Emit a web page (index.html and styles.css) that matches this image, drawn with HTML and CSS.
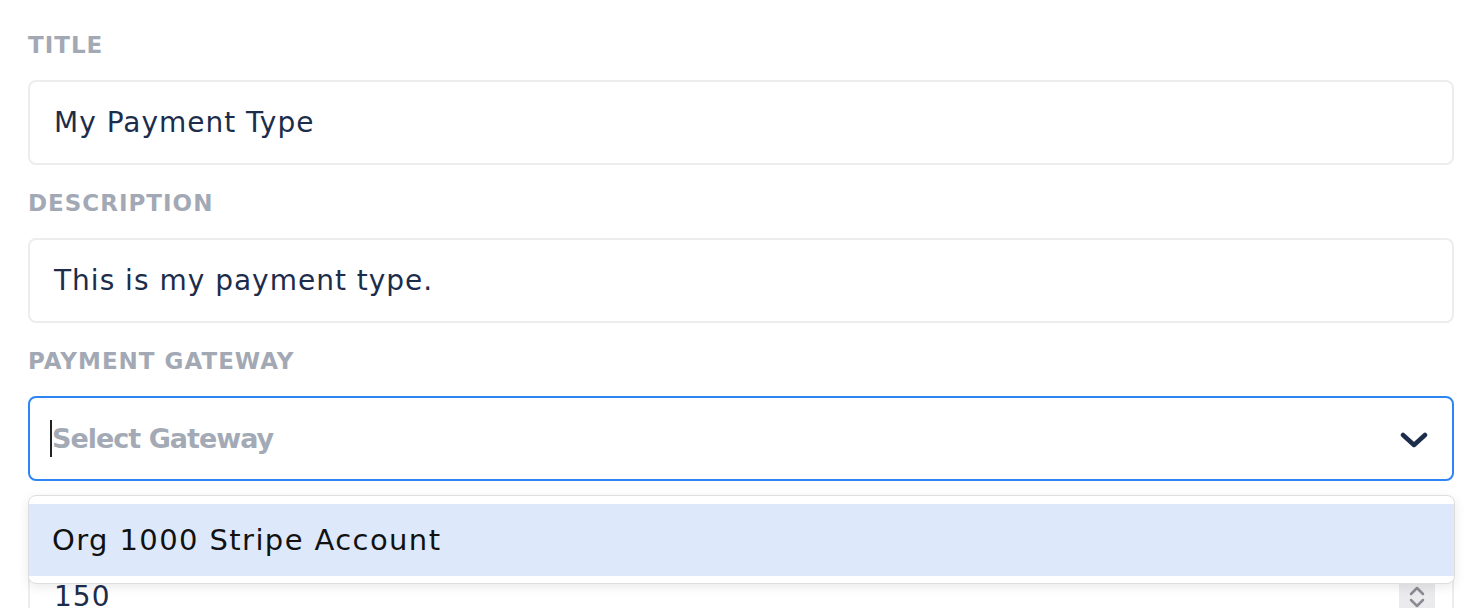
FILE: index.html
```html
<!DOCTYPE html>
<html>
<head>
<meta charset="utf-8">
<link rel="stylesheet" href="styles.css">
</head>
<body>
<div class="form">
  <div class="field">
    <div class="label">Title</div>
    <div class="input"><span class="value">My Payment Type</span></div>
  </div>
  <div class="field">
    <div class="label">Description</div>
    <div class="input"><span class="value">This is my payment type.</span></div>
  </div>
  <div class="field select-field">
    <div class="label">Payment Gateway</div>
    <div class="input select">
      <span class="caret"></span><span class="placeholder">Select Gateway</span>
      <svg class="chevron" width="28" height="20" viewBox="0 0 28 20"><path d="M3 5 L14 15 L25 5" fill="none" stroke="#1d2e4c" stroke-width="4.5" stroke-linecap="round" stroke-linejoin="round"/></svg>
    </div>
    <div class="menu">
      <div class="option active">Org 1000 Stripe Account</div>
    </div>
  </div>
  <div class="field">
    <div class="label hidden-label">Amount</div>
    <div class="input number"><span class="value">150</span>
      <div class="spinner">
        <svg width="20" height="12" viewBox="0 0 20 12"><path d="M4 9 L10 3 L16 9" fill="none" stroke="#8b8b95" stroke-width="2.5" stroke-linecap="round" stroke-linejoin="round"/></svg>
        <svg width="20" height="12" viewBox="0 0 20 12"><path d="M4 3 L10 9 L16 3" fill="none" stroke="#8b8b95" stroke-width="2.5" stroke-linecap="round" stroke-linejoin="round"/></svg>
      </div>
    </div>
  </div>
</div>
</body>
</html>
```
FILE: styles.css
```css
html, body {
  margin: 0;
  padding: 0;
  background: #ffffff;
  overflow: hidden;
}
body {
  font-family: "DejaVu Sans", "Noto Sans", sans-serif;
}
.form {
  padding: 30px 20px 0 28px;
  display: flex;
  flex-direction: column;
  gap: 23px;
}
.field {
  display: flex;
  flex-direction: column;
  gap: 20px;
  position: relative;
}
.label {
  height: 30px;
  line-height: 30px;
  font-size: 23px;
  font-weight: bold;
  text-transform: uppercase;
  color: #a2a9b5;
  letter-spacing: 1px;
}
.hidden-label {
  visibility: hidden;
}
.input {
  box-sizing: border-box;
  height: 85px;
  border: 2px solid #ededed;
  border-radius: 8px;
  display: flex;
  align-items: center;
  padding: 0 17px 0 24px;
  position: relative;
}
.value {
  font-size: 28px;
  color: #1c2d4b;
  letter-spacing: 1px;
}
.select {
  border-color: #2e86f5;
  padding-left: 20px;
}
.caret {
  width: 2px;
  height: 37px;
  background: #222;
}
.placeholder {
  font-size: 27px;
  font-weight: 600;
  color: #a3aab6;
  letter-spacing: -1px;
  flex: 1;
}
.chevron {
  margin-right: 7px;
  margin-top: 2px;
}
.menu {
  position: absolute;
  left: 0;
  right: -1px;
  top: 149px;
  box-sizing: border-box;
  height: 89px;
  background: #fff;
  border: 1px solid #dedede;
  border-radius: 8px;
  box-shadow: 0 3px 12px rgba(0, 0, 0, 0.09);
  padding: 8px 0;
  z-index: 5;
}
.option {
  height: 72px;
  display: flex;
  align-items: center;
  padding-left: 23px;
  font-size: 29px;
  letter-spacing: 1.4px;
  color: #111;
}
.option.active {
  background: #dde9fb;
}
.number {
  justify-content: space-between;
}
.spinner {
  width: 36px;
  height: 50px;
  background: #ebebee;
  display: flex;
  flex-direction: column;
  align-items: center;
  justify-content: center;
}
```
